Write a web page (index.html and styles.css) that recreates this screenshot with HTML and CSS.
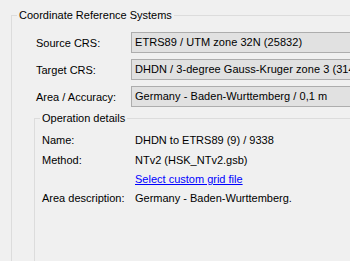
FILE: index.html
```html
<!DOCTYPE html>
<html lang="en">
<head>
    <meta charset="UTF-8">
    <meta name="viewport" content="width=device-width, initial-scale=1.0">
    <title>Coordinate Reference Systems</title>
    <link rel="stylesheet" href="styles.css">
</head>
<body>
    <fieldset class="group">
        <legend>Coordinate Reference Systems</legend>

        <div class="crs-rows">
            <label class="crs-label">Source CRS:</label>
            <div class="crs-box">ETRS89 / UTM zone 32N (25832)</div>

            <label class="crs-label">Target CRS:</label>
            <div class="crs-box">DHDN / 3-degree Gauss-Kruger zone 3 (31467)</div>

            <label class="crs-label">Area / Accuracy:</label>
            <div class="crs-box">Germany - Baden-Wurttemberg / 0,1 m</div>
        </div>

        <fieldset class="group inner">
            <legend>Operation details</legend>

            <div class="details">
                <span>Name:</span>
                <span>DHDN to ETRS89 (9) / 9338</span>

                <span>Method:</span>
                <span>NTv2 (HSK_NTv2.gsb)</span>

                <span></span>
                <span><a href="#" class="link">Select custom grid file</a></span>

                <span>Area description:</span>
                <span>Germany - Baden-Wurttemberg.</span>
            </div>
        </fieldset>
    </fieldset>
</body>
</html>
```

FILE: styles.css
```css
body {
    margin: 0;
    padding: 0;
    background-color: #f0f0f0;
    font-family: "Liberation Sans", Arial, sans-serif;
    font-size: 11px;
    color: #000;
    overflow: hidden;
}

.group {
    margin: 9px 0 0 11px;
    padding: 0 0 40px 0;
    border: 1px solid #dcdcdc;
    min-width: 420px;
    min-height: 300px;
}

.group legend {
    margin-left: 5px;
    padding: 0 2px;
    line-height: 13px;
}

.crs-rows {
    display: grid;
    grid-template-columns: 95px 280px;
    row-gap: 6px;
    padding: 10px 0 0 24px;
    align-items: center;
}

.crs-box {
    height: 19px;
    line-height: 19px;
    padding-left: 3px;
    border: 1px solid #adadad;
    background-color: #e1e1e1;
    white-space: nowrap;
    overflow: hidden;
    letter-spacing: 0.05px;
}

.group.inner {
    margin: 5px 0 0 22px;
    min-height: 200px;
}

.details {
    display: grid;
    grid-template-columns: 93px auto;
    grid-template-rows: 20px 20px 17px 22px;
    align-items: center;
    padding: 5px 0 0 7px;
    white-space: nowrap;
}

.link {
    color: #0000ff;
}
```
